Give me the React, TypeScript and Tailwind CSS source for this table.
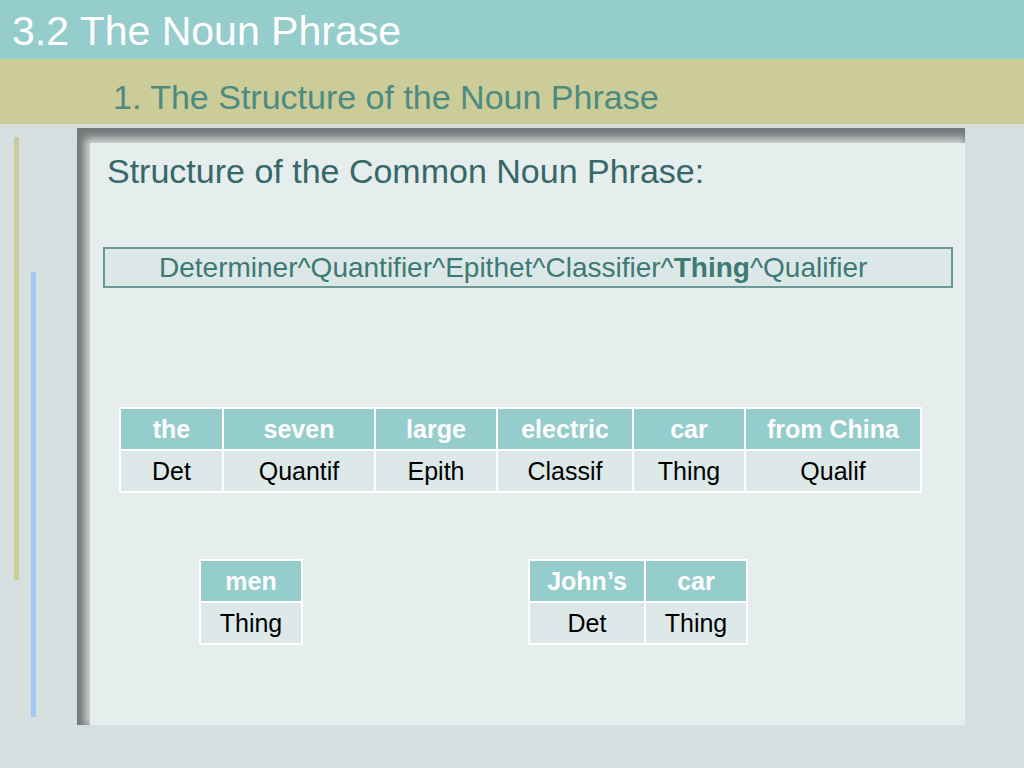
import React from "react";

const font = { fontFamily: '"Liberation Sans", Arial, sans-serif' };

function Table({ cols, head, body }: { cols: number[]; head: string[]; body: string[] }) {
  return (
    <table className="border-collapse table-fixed" style={{ width: cols.reduce((a, b) => a + b, 0) }}>
      <colgroup>
        {cols.map((w, i) => (
          <col key={i} style={{ width: w }} />
        ))}
      </colgroup>
      <tbody>
        <tr className="h-[42px] bg-[#95cccc]">
          {head.map((h, i) => (
            <td key={i} className="border-2 border-white text-center text-[25px] font-bold text-white leading-none p-0">
              {h}
            </td>
          ))}
        </tr>
        <tr className="h-[42px] bg-[#dce9e8]">
          {body.map((h, i) => (
            <td key={i} className="border-2 border-white text-center text-[25px] text-black leading-none p-0">
              {h}
            </td>
          ))}
        </tr>
      </tbody>
    </table>
  );
}

export default function App() {
  return (
    <div className="w-[1024px] h-[768px] overflow-hidden flex flex-col bg-[#d5dfdf]" style={font}>
      <div className="h-[59px] bg-[#95cccc] flex items-center pl-[12px] pt-[3px]">
        <span className="text-white text-[41px] leading-none">3.2 The Noun Phrase</span>
      </div>
      <div className="h-[65px] bg-[#cccc99] flex items-center pl-[113px] pt-[10px]">
        <span className="text-[#4b8b82] text-[34px] leading-none">1. The Structure of the Noun Phrase</span>
      </div>
      <div className="flex flex-row flex-1">
        <div className="ml-[14px] mt-[13px] w-[5px] h-[443px] bg-[#cccc99]" />
        <div className="ml-[12px] mt-[148px] w-[5px] h-[445px] bg-[#9fcaf7]" />
        <div className="ml-[41px] mt-[4px] w-[888px] h-[597px] bg-[#757779] pl-[13px] pt-[15px] flex overflow-hidden">
          <div className="flex-1 bg-[#e6eded] flex flex-col shadow-[-2px_-2px_8px_3px_rgba(225,232,232,0.85)]">
            <div className="pl-[17px] mt-[9px] text-[34px] leading-[39px] text-[#356868]">
              Structure of the Common Noun Phrase:
            </div>
            <div className="ml-[13px] mt-[56px] w-[850px] h-[41px] border-2 border-[#6a9896] bg-[#dce8e8] flex items-center pl-[54px]">
              <span className="text-[28px] leading-none text-[#3c7a74]">
                Determiner^Quantifier^Epithet^Classifier^<b>Thing</b>^Qualifier
              </span>
            </div>
            <div className="ml-[29px] mt-[119px]">
              <Table
                cols={[103, 152, 122, 136, 112, 176]}
                head={["the", "seven", "large", "electric", "car", "from China"]}
                body={["Det", "Quantif", "Epith", "Classif", "Thing", "Qualif"]}
              />
            </div>
            <div className="flex flex-row mt-[66px] ml-[109px]">
              <Table cols={[102]} head={["men"]} body={["Thing"]} />
              <div className="ml-[225px]">
                <Table cols={[116, 102]} head={["John\u2019s", "car"]} body={["Det", "Thing"]} />
              </div>
            </div>
          </div>
        </div>
      </div>
    </div>
  );
}
